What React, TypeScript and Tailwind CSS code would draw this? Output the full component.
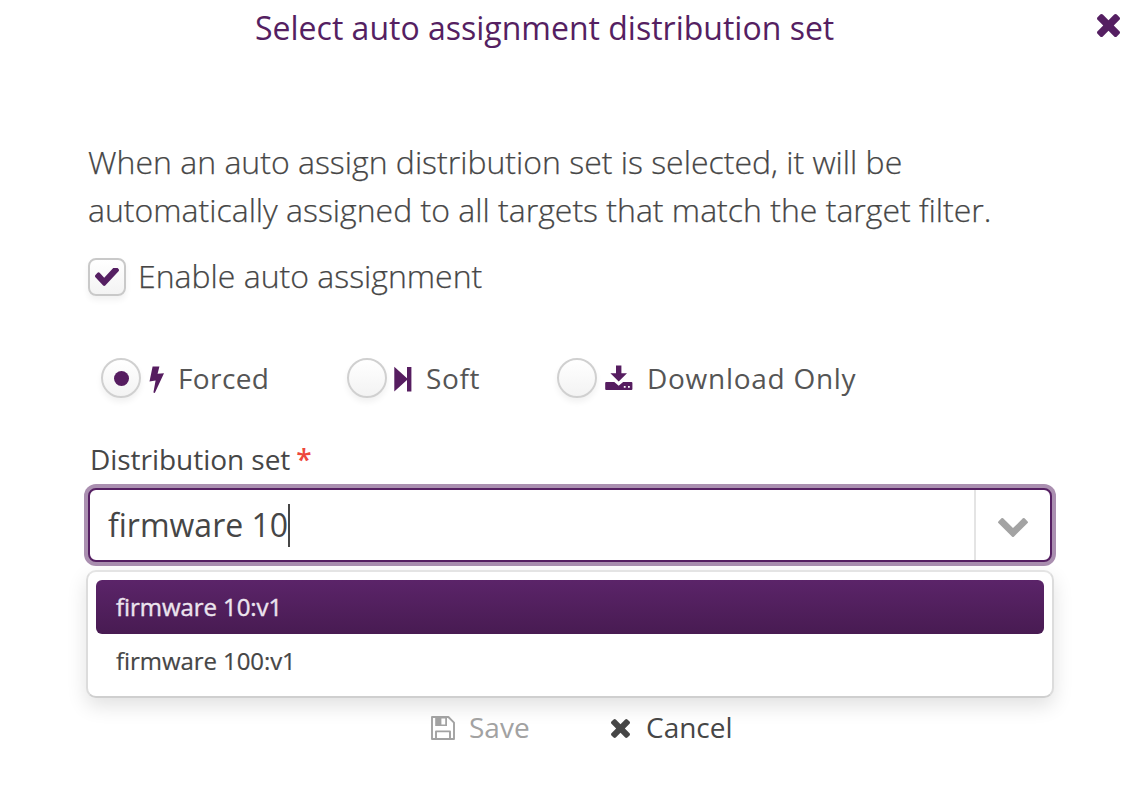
const TIMES =
  "M1490 1322q0 40-28 68l-136 136q-28 28-68 28t-68-28l-294-294-294 294q-28 28-68 28t-68-28l-136-136q-28-28-28-68t28-68l294-294-294-294q-28-28-28-68t28-68l136-136q28-28 68-28t68 28l294 294 294-294q28-28 68-28t68 28l136 136q28 28 28 68t-28 68l-294 294 294 294q28 28 28 68z";

function Times({ className }: { className: string }) {
  return (
    <svg viewBox="302 366 1188 1188" preserveAspectRatio="none" fill="currentColor" className={className}>
      <path d={TIMES} />
    </svg>
  );
}

function Check() {
  return (
    <svg viewBox="121 434 1550 1088" preserveAspectRatio="none" fill="currentColor" className="h-[18px] w-6">
      <path d="M1671 566q0 40-28 68l-724 724-136 136q-28 28-68 28t-68-28l-136-136-362-362q-28-28-28-68t28-68l136-136q28-28 68-28t68 28l294 295 656-657q28-28 68-28t68 28l136 136q28 28 28 68z" />
    </svg>
  );
}

function ChevronDown() {
  return (
    <svg viewBox="90 532 1612 1036" preserveAspectRatio="none" fill="currentColor" className="h-[19px] w-[30px]">
      <path d="M1683 808l-742 741q-19 19-45 19t-45-19l-742-741q-19-19-19-45.5t19-45.5l166-165q19-19 45-19t45 19l531 531 531-531q19-19 45-19t45 19l166 165q19 19 19 45.5t-19 45.5z" />
    </svg>
  );
}

function Bolt() {
  return (
    <svg viewBox="0 0 15 27" fill="currentColor" className="h-[27px] w-[15px]">
      <path d="M3.6 0.4H10.4L8.6 7.8L15 7.2L5.8 27L4.4 26.6L6.6 14.6L0.5 15.4Z" />
    </svg>
  );
}

function StepForward() {
  return (
    <svg viewBox="0 0 18 26" fill="currentColor" className="h-[26px] w-[18px]">
      <path d="M0.3 0.8L13 12.2V1H17.4V25.4H13V14L0.3 25.6Z" />
    </svg>
  );
}

function Download() {
  return (
    <svg viewBox="0 0 28 26" fill="currentColor" className="h-[26px] w-7">
      <path d="M11 0.4H16.4V8.2H22L13.7 16.6L5.4 8.2H11Z" />
      <path
        fillRule="evenodd"
        d="M1.2 17H9.3L13.7 20.8L18.1 17H26.4Q27.4 17 27.4 18V24Q27.4 25 26.4 25H1.2Q.2 25 .2 24V18Q.2 17 1.2 17ZM18.8 21V22.8H20.6V21ZM23 21V22.8H24.8V21Z"
      />
    </svg>
  );
}

function Floppy() {
  return (
    <svg viewBox="0 0 24 24" fill="none" stroke="currentColor" strokeWidth="1.9" strokeLinejoin="round" className="h-6 w-6">
      <path d="M1 1H17.4L23 6.6V23H1Z" />
      <path d="M5 23V15.4H19V23" />
      <path fill="currentColor" stroke="none" fillRule="evenodd" d="M4.2 1H16V10H4.2ZM10.4 2.4V8.4H14.2V2.4Z" />
    </svg>
  );
}

function Radio({ checked = false }: { checked?: boolean }) {
  return (
    <span className="flex h-10 w-10 shrink-0 items-center justify-center rounded-full border-2 border-[#d0d0d0] bg-linear-to-b from-white to-[#f3f3f3] shadow-[0_4px_6px_rgba(0,0,0,0.06)]">
      {checked && <span className="h-[15px] w-[15px] rounded-full bg-[#561d60]" />}
    </span>
  );
}

export default function App() {
  return (
    <main className="h-[793px] w-[1140px] overflow-hidden bg-white font-['Open_Sans',sans-serif] text-[#464646]">
      <header className="flex h-[56px] items-start text-[#551f62]">
        <h1 className="ml-[255px] w-[842px] text-[32px] leading-[56px] whitespace-nowrap">
          Select auto assignment distribution set
        </h1>
        <button className="mt-[14px]" aria-label="Close">
          <Times className="h-[23px] w-[23px]" />
        </button>
      </header>

      <p className="mt-[82px] ml-[88px] w-[960px] text-[32px] leading-[48px] font-light [-webkit-text-stroke:0.25px_#464646]">
        When an auto assign distribution set is selected, it will be
        <br />
        automatically assigned to all targets that match the target filter.
      </p>

      <label className="mt-[24px] ml-[88px] flex h-[38px] items-center">
        <span className="flex h-[38px] w-[38px] items-center justify-center rounded-lg border-2 border-[#c9c9c9] bg-linear-to-b from-white to-[#f3f3f3] text-[#551f62] shadow-[0_4px_6px_rgba(0,0,0,0.06)]">
          <Check />
        </span>
        <span className="mb-[2px] ml-3 text-[32px] leading-[38px] font-light [-webkit-text-stroke:0.25px_#464646]">
          Enable auto assignment
        </span>
      </label>

      <div className="mt-[62px] ml-[101px] flex h-10 items-center text-[28px] leading-10 whitespace-nowrap text-[#555]">
        <label className="flex w-[246px] items-center">
          <Radio checked />
          <span className="mt-0.5 mr-[14px] ml-2 text-[#561d60]"><Bolt /></span>
          <span className="tracking-[0.4px]">Forced</span>
        </label>
        <label className="flex w-[210px] items-center">
          <Radio />
          <span className="mt-0.5 mr-[14px] ml-[7px] text-[#561d60]"><StepForward /></span>
          <span className="tracking-[0.6px]">Soft</span>
        </label>
        <label className="flex items-center">
          <Radio />
          <span className="mr-[14px] ml-2 text-[#561d60]"><Download /></span>
          <span className="tracking-[0.72px]">Download Only</span>
        </label>
      </div>

      <div className="mt-[41px] ml-[90px] h-[41px] text-[28px] leading-10 tracking-[-0.04px]">
        Distribution set<span className="ml-[6px] font-semibold text-[#ed473b]">*</span>
      </div>

      <div className="mt-2 ml-[88px] flex h-[74px] w-[964px] rounded-lg border-2 border-[#551f62] bg-white shadow-[0_0_0_4px_#aa8fb0]">
        <div className="flex flex-1 items-center pl-[18px] text-[32px]">
          <span>firmware 10</span>
          <span className="h-[43px] w-0.5 bg-[#464646]" />
        </div>
        <button className="flex w-[76px] items-center justify-center border-l-2 border-[#e4e4e4] pt-1 text-[#a3a3a3]" aria-label="Open">
          <ChevronDown />
        </button>
      </div>

      <div className="mt-2 ml-[86px] h-[128px] w-[968px] rounded-[10px] border-2 border-t-[#e4e4e4] border-r-[#dcdcdc] border-b-[#cfcfcf] border-l-[#dcdcdc] bg-white p-2 text-[24px] leading-[54px] tracking-[-0.07px] shadow-[0_8px_20px_rgba(0,0,0,0.12)]">
        <div className="h-[54px] rounded-md bg-linear-to-b from-[#5b2469] to-[#481b52] pl-5 text-[#ece4ee] [-webkit-text-stroke:0.4px_#ece4ee]">
          firmware 10:v1
        </div>
        <div className="h-[54px] pl-5 [-webkit-text-stroke:0.2px_#464646]">firmware 100:v1</div>
      </div>

      <footer className="mt-[10px] ml-[431px] flex h-10 items-center text-[28px] leading-10">
        <button className="flex w-[180px] items-center text-[#a2a2a2]">
          <Floppy />
          <span className="mb-[2px] ml-[14px]">Save</span>
        </button>
        <button className="flex items-center">
          <Times className="h-[19px] w-[19px]" />
          <span className="mb-[2px] ml-4">Cancel</span>
        </button>
      </footer>
    </main>
  );
}
